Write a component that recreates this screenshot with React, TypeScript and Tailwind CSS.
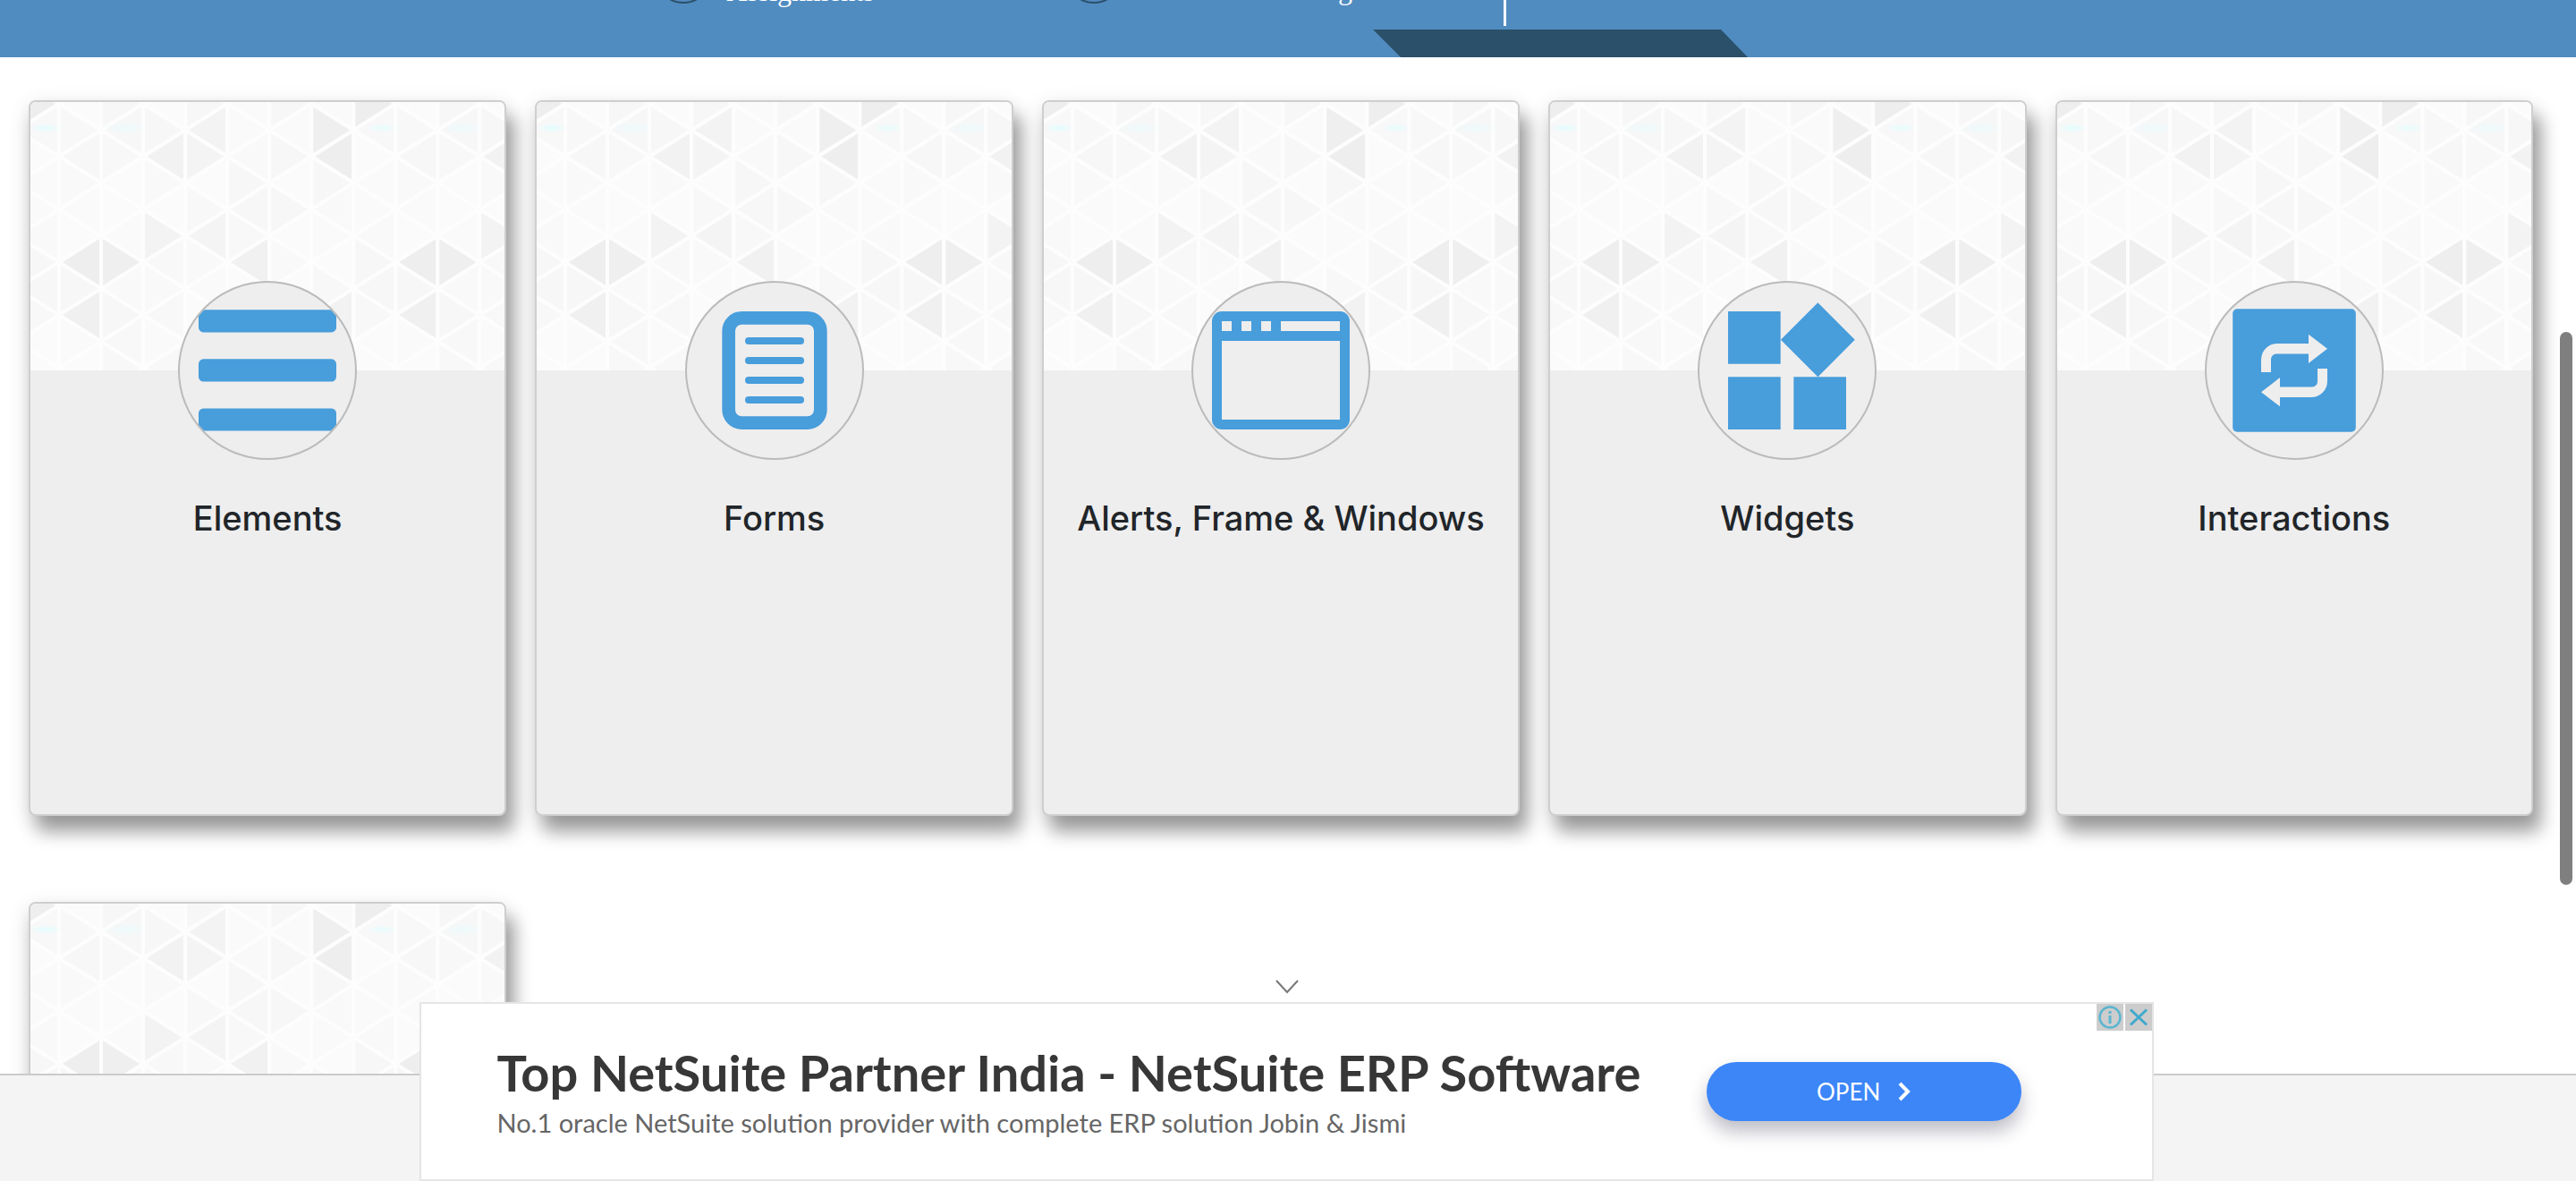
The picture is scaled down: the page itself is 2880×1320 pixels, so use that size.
import React from "react";

type Mark = React.ReactNode;

const DARK: Record<string, string> = {
  "7,-2": "#eeeeee",
  "3,-1": "#f3f3f3",
  "6,-1": "#efefef",
  "2,0": "#f2f2f2",
  "3,0": "#f4f4f4",
  "6,0": "#eeeeee",
  "2,3": "#f3f3f3",
  "3,3": "#f4f4f4",
  "0,4": "#eeeeee",
  "1,4": "#efefef",
  "4,4": "#f1f1f1",
  "0,6": "#f0f0f0",
  "6,6": "#f2f2f2",
};
const LIGHT = ["#f8f8f8", "#fafafa", "#f7f7f7", "#fbfbfb", "#f9f9f9"];

/* Triangle lattice: columns 47 wide, half rows 29.5 tall, repeating every 8 columns. */
function Pattern() {
  const cells: Mark[] = [];
  const px = (k: number) => 32 + 47 * k;
  const py = (j: number) => 61 + 29.5 * j;
  for (let s = -1; s < 12; s++) {
    const m = (s + 8) % 8;
    for (let j = -3; j < 10; j++) {
      const left = (s + j + 20) % 2 === 0;
      const a = left ? px(s) : px(s + 1);
      const b = left ? px(s + 1) : px(s);
      const fill = DARK[`${m},${j}`] ?? LIGHT[(m * 3 + (j + 3) * 7 + ((m * j + 40) % 3)) % 5];
      cells.push(
        <path key={`${s}.${j}`} d={`M${a} ${py(j)}L${b} ${py(j - 1)}V${py(j + 1)}Z`} fill={fill} />
      );
    }
  }
  return (
    <svg
      aria-hidden="true"
      className="block h-[300px] w-full bg-[#fafafa]"
      viewBox="0 0 530 300"
      preserveAspectRatio="xMinYMin slice"
    >
      <defs>
        <radialGradient id="tint">
          <stop offset="0" stopColor="#e2fdff" />
          <stop offset="1" stopColor="#e2fdff" stopOpacity="0" />
        </radialGradient>
      </defs>
      <g stroke="#fdfdfd" strokeWidth="4" strokeLinejoin="round">
        {cells}
      </g>
      <ellipse cx="17" cy="29" rx="18" ry="5" fill="url(#tint)" />
      <ellipse cx="107" cy="29" rx="24" ry="7" fill="url(#tint)" opacity="0.5" />
      <ellipse cx="393" cy="29" rx="18" ry="5" fill="url(#tint)" opacity="0.8" />
      <ellipse cx="483" cy="29" rx="24" ry="7" fill="url(#tint)" opacity="0.5" />
    </svg>
  );
}

const CARDS: { title: string; icon: Mark }[] = [
  {
    title: "Elements",
    icon: (
      <>
        <rect x="23" y="32.2" width="154" height="25.2" rx="5.5" />
        <rect x="23" y="87.3" width="154" height="25.2" rx="5.5" />
        <rect x="23" y="142.4" width="154" height="25.2" rx="5.5" />
      </>
    ),
  },
  {
    title: "Forms",
    icon: (
      <>
        <rect x="48.67" y="41.33" width="102.67" height="117.33" rx="14.67" fill="none" stroke="#489ddb" strokeWidth="14.67" />
        <rect x="67" y="63" width="66" height="8" rx="4" />
        <rect x="67" y="85" width="66" height="8" rx="4" />
        <rect x="67" y="107" width="66" height="8" rx="4" />
        <rect x="67" y="129" width="66" height="8" rx="4" />
      </>
    ),
  },
  {
    title: "Alerts, Frame & Windows",
    icon: (
      <path
        fillRule="evenodd"
        d="M34 34H166A11 11 0 0 1 177 45V155A11 11 0 0 1 166 166H34A11 11 0 0 1 23 155V45A11 11 0 0 1 34 34ZM34 45V56H45V45ZM56 45V56H67V45ZM78 45V56H89V45ZM100 45V56H166V45ZM34 67V155H166V67Z"
      />
    ),
  },
  {
    title: "Widgets",
    icon: (
      <path d="M34 34H92.67V92.67H34ZM34 107.33H92.67V166H34ZM107.33 107.33H166V166H107.33ZM134.4 24.3L175.8 65.8L134.4 107.3L92.9 65.8Z" />
    ),
  },
  {
    title: "Interactions",
    icon: (
      <>
        <rect x="31.2" y="31.2" width="137.6" height="137.6" rx="5" />
        <g fill="#eeeeee">
          <path d="M63 102V88A18 18 0 0 1 81 70H116V59.7L137 75.7L116 92V81.5H80A6 6 0 0 0 74 87.5V102Z" />
          <path d="M63 102V88A18 18 0 0 1 81 70H116V59.7L137 75.7L116 92V81.5H80A6 6 0 0 0 74 87.5V102Z" transform="rotate(180 100 100)" />
        </g>
      </>
    ),
  },
];

function Card({ title, icon }: { title?: string; icon?: Mark }) {
  return (
    <a
      href="#"
      className="block h-[800px] overflow-hidden rounded-lg border-2 border-[#cecece] bg-[#eeeeee] shadow-[9px_18px_20px_0px_rgba(0,0,0,0.35),0px_6px_24px_0px_rgba(0,0,0,0.12)]"
    >
      <Pattern />
      {title && (
        <div className="relative -mt-[100px] flex flex-col items-center">
          <span className="size-[200px] overflow-hidden rounded-full border-2 border-[#bbbbbb] bg-[#eeeeee]">
            <svg aria-hidden="true" className="-m-0.5 block size-[200px]" viewBox="0 0 200 200" fill="#489ddb">
              {icon}
            </svg>
          </span>
          <h5 className="mt-[41px] font-['Inter',sans-serif] text-[38px] leading-[48px] font-medium whitespace-nowrap text-[#212529]">
            {title}
          </h5>
        </div>
      )}
    </a>
  );
}

function Banner() {
  return (
    <header className="relative h-16 overflow-hidden bg-[#508cc0] font-['Liberation_Serif',serif] text-white">
      <svg aria-hidden="true" className="absolute inset-0 h-16 w-full" viewBox="0 0 2880 64" preserveAspectRatio="xMidYMid slice">
        <circle cx="764" cy="-28" r="31" fill="none" stroke="#2b506a" strokeWidth="2" />
        <circle cx="1223" cy="-28" r="31" fill="none" stroke="#2b506a" strokeWidth="2" />
        <rect x="1681" y="0" width="3" height="29" fill="#ffffff" />
        <path d="M1535 33H1924L1954 64H1566Z" fill="#2b506a" />
      </svg>
      <p className="absolute -top-[30px] left-[28.2%] text-[32px] leading-10 font-medium">Assignments</p>
      <p className="absolute -top-[32px] right-[47.5%] text-[32px] leading-10 font-medium">Training</p>
    </header>
  );
}

function Ad() {
  return (
    <aside className="absolute top-[1089px] left-[16.3%] flex w-[67.3%] flex-col items-center">
      <button aria-label="Collapse" className="-mb-px flex h-8 w-12 items-start justify-center pt-1.5">
        <svg className="h-4 w-7" viewBox="0 0 28 16" fill="none" stroke="#777777" strokeWidth="2">
          <path d="M2 1L14 14L26 1" />
        </svg>
      </button>
      <div className="relative flex h-[200px] w-full items-center border-2 border-[#e4e5e7] bg-white pl-[84px] font-['Lato',sans-serif]">
        <div className="flex flex-col pt-1.5">
          <a href="#" className="text-[56px] leading-16 font-bold whitespace-nowrap text-[#373737]">
            Top NetSuite Partner India - NetSuite ERP Software
          </a>
          <p className="text-[29px] leading-12 whitespace-nowrap text-[#666666]">
            No.1 oracle NetSuite solution provider with complete ERP solution Jobin &amp; Jismi
          </p>
        </div>
        <button className="absolute right-[146px] flex h-[66px] w-[352px] items-center justify-center gap-5 rounded-full bg-[#3c86f8] text-[26px] text-white shadow-[0_12px_20px_rgba(40,40,70,0.3)]">
          OPEN
          <svg aria-hidden="true" className="h-[22px] w-[14px]" viewBox="0 0 14 22" fill="none" stroke="currentColor" strokeWidth="4">
            <path d="M2 2L11 11L2 20" />
          </svg>
        </button>
        <div className="absolute top-0 right-0 flex gap-0.5">
          <button aria-label="Ad information" className="bg-[#cdcdcd]">
            <svg className="size-[30px]" viewBox="0 0 30 30" fill="none" stroke="#5bb5d0" strokeWidth="2.5">
              <circle cx="15" cy="15" r="11.5" />
              <path d="M15 8V11M15 13V22" strokeWidth="3" />
            </svg>
          </button>
          <button aria-label="Close ad" className="bg-[#cccccc]">
            <svg className="size-[30px]" viewBox="0 0 30 30" fill="none" stroke="#3fa9cd" strokeWidth="3">
              <path d="M6 6.500L24 23.500M24 6.500L6 23.500" />
            </svg>
          </button>
        </div>
      </div>
    </aside>
  );
}

export default function App() {
  return (
    <div className="relative flex h-screen flex-col overflow-hidden bg-white">
      <Banner />
      <main className="min-h-0 flex-1 overflow-hidden pt-12 pr-12 pl-8">
        <div className="grid grid-cols-5 gap-x-8 gap-y-24">
          {CARDS.map((c) => (
            <Card key={c.title} {...c} />
          ))}
          <Card />
        </div>
      </main>
      <footer className="h-[120px] shrink-0 border-t-2 border-[#cbcbcb] bg-[#f4f4f4]" />
      <Ad />
      <div className="absolute top-[371px] right-1 h-[618px] w-3.5 rounded-full bg-[#7f7f7f]" />
    </div>
  );
}
